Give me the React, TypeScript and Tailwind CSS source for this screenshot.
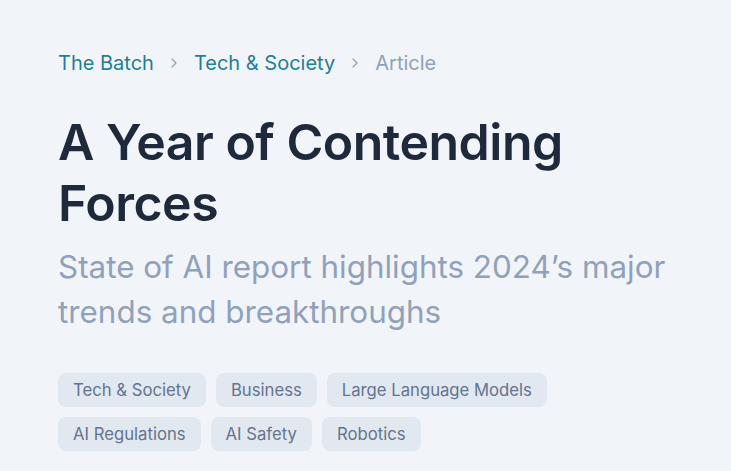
import { ChevronRight } from "lucide-react";

const tags = [
  "Tech & Society",
  "Business",
  "Large Language Models",
  "AI Regulations",
  "AI Safety",
  "Robotics",
];

const Breadcrumb = () => (
  <nav className="flex items-center text-xl leading-7">
    <a href="#" className="text-[#1f7f97]">
      The Batch
    </a>
    <ChevronRight size={16} strokeWidth={1.75} className="mx-3 text-slate-400" />
    <a href="#" className="text-[#1f7f97]">
      Tech &amp; Society
    </a>
    <ChevronRight size={16} strokeWidth={1.75} className="mx-3 text-slate-400" />
    <span className="text-slate-400">Article</span>
  </nav>
);

export default function App() {
  return (
    <div
      className="min-h-screen bg-[#f1f5f9] px-[58px] pt-[49px]"
      style={{ fontFamily: "Inter, 'Noto Sans', sans-serif" }}
    >
      <Breadcrumb />
      <h1 className="mt-[35px] max-w-[560px] text-[50px] font-semibold leading-[61px] tracking-[-0.01em] text-[#1e293b]">
        A Year of Contending Forces
      </h1>
      <p className="mt-[11px] max-w-[640px] text-[31.4px] leading-[45px] text-slate-400">
        State of AI report highlights 2024’s major trends and breakthroughs
      </p>
      <div className="mt-[38px] flex max-w-[560px] flex-wrap gap-x-[10px] gap-y-[10px]">
        {tags.map((tag) => (
          <span
            key={tag}
            className="rounded-lg bg-[#e2e8f0] px-[15px] py-[5px] text-[16.7px] leading-6 text-slate-500"
          >
            {tag}
          </span>
        ))}
      </div>
    </div>
  );
}
